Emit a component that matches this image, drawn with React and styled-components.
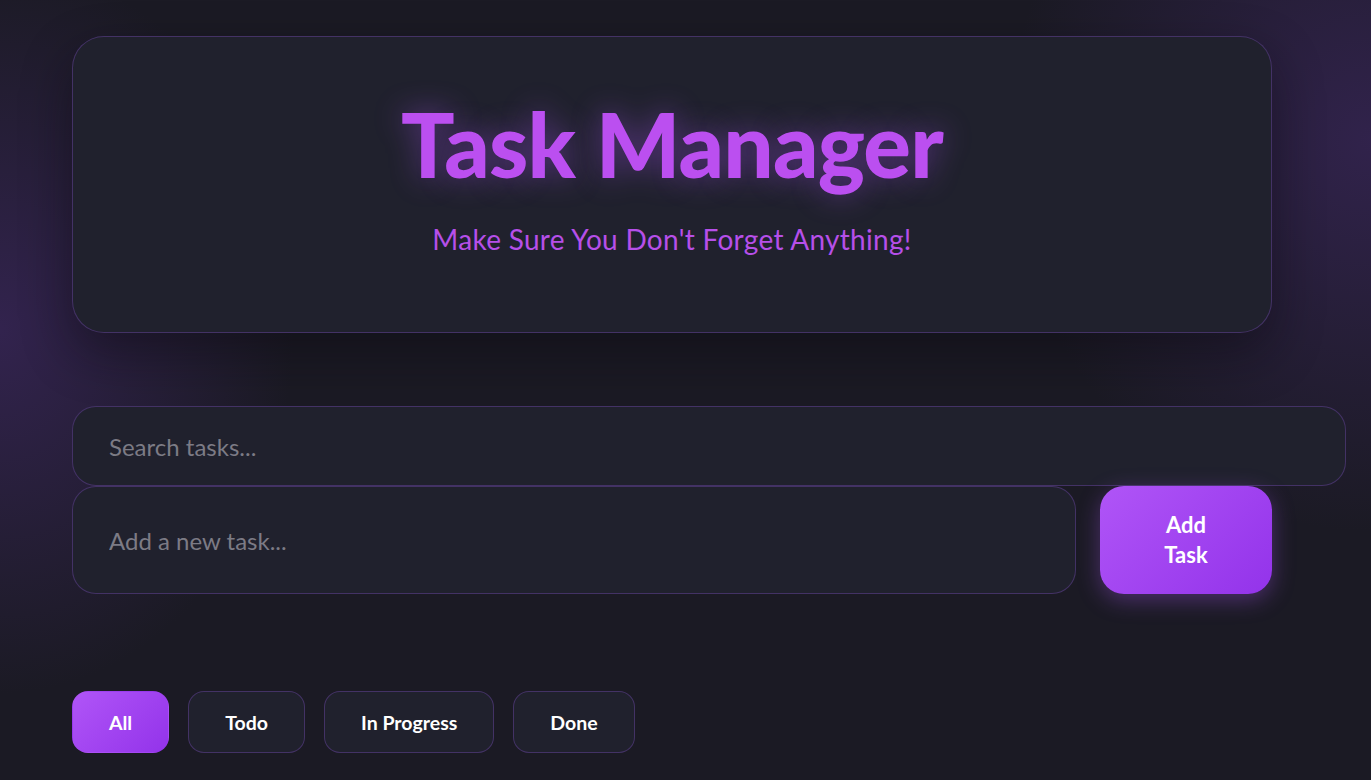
import styled, { createGlobalStyle } from 'styled-components'

const GlobalStyle = createGlobalStyle`
	* {
		box-sizing: border-box;
	}

	html,
	body {
		margin: 0;
		min-height: 100%;
	}

	body {
		min-height: 780px;
		font-family: 'Lato', 'Inter', sans-serif;
		color: #fff;
		background-color: #1b1a24;
		background-image:
			radial-gradient(ellipse 420px 520px at 0px 330px, rgba(58, 38, 92, 0.75), transparent 70%),
			radial-gradient(ellipse 520px 560px at 1371px 140px, rgba(58, 38, 92, 0.7), transparent 70%);
		overflow: hidden;
	}
`

const accent = 'linear-gradient(135deg, #b055f7 0%, #9333ea 100%)'

const Page = styled.div`
	padding: 36px 72px;
	width: 1371px;
`

const Header = styled.header`
	width: 1200px;
	height: 297px;
	padding-top: 52px;
	border: 1px solid rgba(110, 70, 170, 0.45);
	border-radius: 32px;
	background: #20212d;
	box-shadow: 0 20px 50px rgba(10, 8, 16, 0.45);
	text-align: center;
`

const Title = styled.h1`
	margin: 0;
	font-size: 89px;
	font-weight: 900;
	line-height: 110px;
	letter-spacing: -0.8px;
	color: #bb4ff0;
	text-shadow: 0 0 30px rgba(168, 85, 247, 0.45);
`

const Subtitle = styled.p`
	margin: 23px 0 0;
	font-size: 28px;
	font-weight: 400;
	letter-spacing: 0.3px;
	color: #b64fe9;
`

const Controls = styled.section`
	margin-top: 73px;
	display: flex;
	flex-direction: column;
`

const Input = styled.input`
	height: ${(p) => p.$height}px;
	width: ${(p) => p.$width};
	padding: 0 36px;
	border: 1px solid rgba(110, 70, 170, 0.45);
	border-radius: 24px;
	background: #20212d;
	font-family: inherit;
	font-size: 24px;
	color: #e5e5ea;
	outline: none;

	&::placeholder {
		color: #7c7b85;
	}
`

const AddRow = styled.div`
	display: flex;
	gap: 24px;
	width: 1200px;
`

const AddButton = styled.button`
	width: 172px;
	height: 108px;
	flex-shrink: 0;
	border: none;
	border-radius: 24px;
	background: ${accent};
	box-shadow: 0 6px 22px rgba(168, 85, 247, 0.35);
	font-family: inherit;
	font-size: 22px;
	font-weight: 700;
	line-height: 30px;
	color: #fff;
	cursor: pointer;
`

const Filters = styled.nav`
	margin-top: 97px;
	display: flex;
	gap: 19px;
`

const FilterButton = styled.button`
	height: 62px;
	padding: 0 36px;
	border: 1px solid ${(p) => (p.$active ? 'transparent' : 'rgba(110, 70, 170, 0.45)')};
	border-radius: 16px;
	background: ${(p) => (p.$active ? accent : '#20212d')};
	font-family: inherit;
	font-size: 19.5px;
	font-weight: 700;
	color: #fff;
	cursor: pointer;
`

const filters = ['All', 'Todo', 'In Progress', 'Done']

export default function App() {
	return (
		<>
			<GlobalStyle />
			<Page>
				<Header>
					<Title>Task Manager</Title>
					<Subtitle>Make Sure You Don't Forget Anything!</Subtitle>
				</Header>
				<Controls>
					<Input $height={80} $width='1274px' placeholder='Search tasks...' />
					<AddRow>
						<Input $height={108} $width='100%' placeholder='Add a new task...' />
						<AddButton>
							Add
							<br />
							Task
						</AddButton>
					</AddRow>
				</Controls>
				<Filters>
					{filters.map((name, index) => (
						<FilterButton key={name} $active={index === 0}>
							{name}
						</FilterButton>
					))}
				</Filters>
			</Page>
		</>
	)
}
